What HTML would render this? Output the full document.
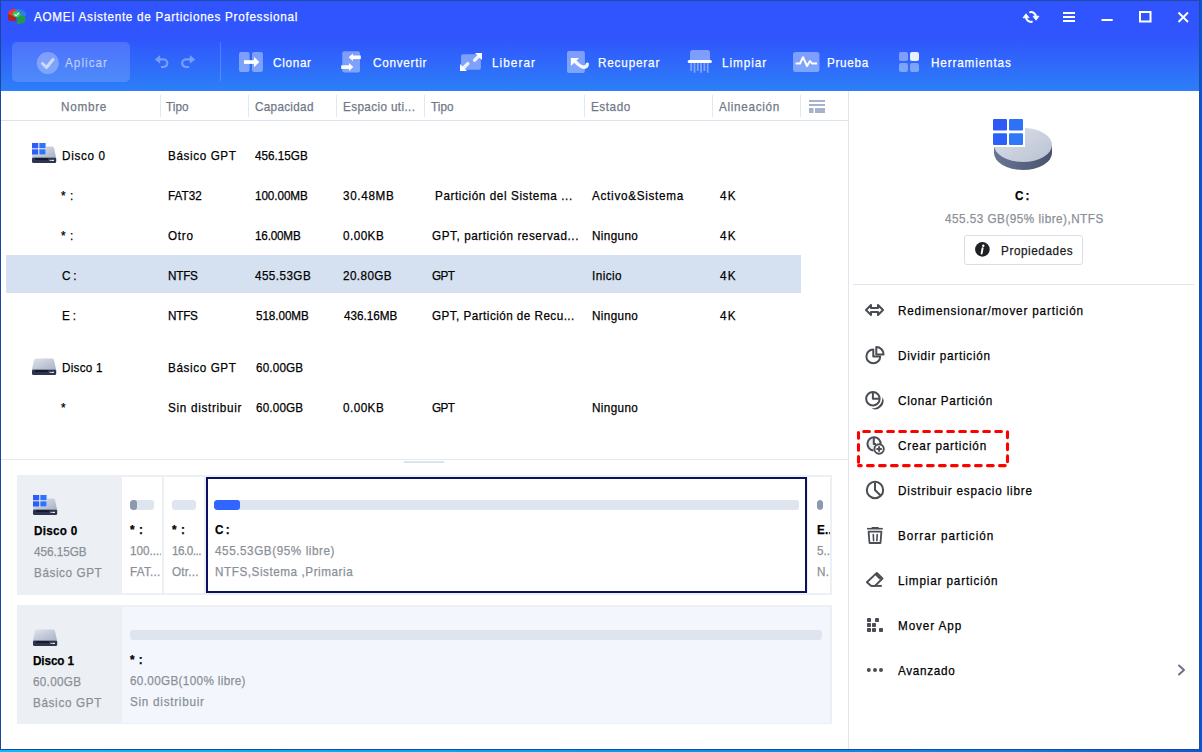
<!DOCTYPE html>
<html><head><meta charset="utf-8"><title>AOMEI</title>
<style>
html,body{margin:0;padding:0;}
body{width:1202px;height:752px;overflow:hidden;position:relative;background:#fff;font-family:"Liberation Sans",sans-serif;}
.abs{position:absolute;}
.t{position:absolute;white-space:nowrap;line-height:1;transform-origin:0 0;-webkit-text-stroke:0.25px currentColor;}
svg{display:block;}
</style></head><body>
<div class="abs" style="left:0;top:0;width:1202px;height:91px;background:linear-gradient(180deg,#3053ff 0px,#3055fd 38px,#2f66fb 60px,#2d7ff7 91px)"></div>
<svg class="abs" style="left:4px;top:5px" width="26" height="23" viewBox="4 5 26 23">
<path d="M16 9 C12 9 8.5 10.5 8 13 V19.5 C8.5 20.5 11 21 16 21 Z" fill="#b52222"/>
<path d="M16 9 C12 9 8.5 10.5 8 13 C8.5 15 12 16 16 16 Z" fill="#e53a3a"/>
<path d="M16 9 C21 9 25.5 10.5 26 13.5 V16 H16 Z" fill="#2d7fe0"/>
<path d="M17 16 H25.2 V21.5 C24.5 23 21 24 17 24 Z" fill="#239a45"/>
<ellipse cx="16.6" cy="14.3" rx="4" ry="3" fill="#35c85a"/>
<path d="M14.6 14.3 L16.2 15.8 L18.8 12.8" stroke="#fff" stroke-width="1.1" fill="none"/>
</svg>
<div class="t" style="left:33.70px;top:9.80px;font-size:13px;letter-spacing:0.789px;color:#ffffff;transform:scaleX(0.9);">AOMEI Asistente de Particiones Professional</div>
<svg class="abs" style="left:1018px;top:6px" width="180" height="22" viewBox="1018 6 180 22">
<g fill="none" stroke="#fff" stroke-width="2">
<path d="M1030.1 12.2 A5 5 0 0 1 1036 16.5" stroke-linecap="round"/>
<path d="M1031.9 21.8 A5 5 0 0 1 1026 17.5" stroke-linecap="round"/>
<line x1="1063" y1="13" x2="1075" y2="13"/><line x1="1063" y1="17" x2="1075" y2="17"/><line x1="1063" y1="21" x2="1075" y2="21"/>
<line x1="1101.5" y1="20" x2="1112.7" y2="20"/>
<rect x="1140" y="12" width="10.5" height="9.5"/>
<line x1="1178.5" y1="12.5" x2="1188" y2="22"/><line x1="1188" y1="12.5" x2="1178.5" y2="22"/>
</g>
<path d="M1023 17.8 L1029 17.8 L1026 13.8 Z" fill="#fff" stroke="#fff" stroke-width="0.8" stroke-linejoin="round"/>
<path d="M1033 16.2 L1039 16.2 L1036 20.2 Z" fill="#fff" stroke="#fff" stroke-width="0.8" stroke-linejoin="round"/>
</svg>
<div class="abs" style="left:12px;top:42px;width:118px;height:40px;border-radius:5px;background:rgba(255,255,255,0.15)"></div>
<svg class="abs" style="left:36px;top:52px" width="24" height="24" viewBox="0 0 24 24">
<circle cx="11.8" cy="11" r="11" fill="rgba(255,255,255,0.28)"/>
<path d="M6.5 11.5 L10.5 15.5 L17 7.5" stroke="rgba(255,255,255,0.6)" stroke-width="3" fill="none" stroke-linecap="round" stroke-linejoin="round"/>
</svg>
<div class="t" style="left:64.60px;top:56.00px;font-size:13px;letter-spacing:1.153px;color:rgba(255,255,255,0.55);transform:scaleX(0.9);">Aplicar</div>
<svg class="abs" style="left:150px;top:50px" width="50" height="22" viewBox="150 50 50 22">
<g fill="none" stroke="rgba(255,255,255,0.35)" stroke-width="2.2">
<path d="M160 59.4 H163.5 A3.8 3.8 0 0 1 163.5 67 H161"/>
<path d="M190.2 59.4 H186 A3.8 3.8 0 0 0 186 67 H189"/>
</g>
<path d="M154.7 59.4 L160.2 55 L160.2 63.8 Z" fill="rgba(255,255,255,0.35)"/>
<path d="M195.3 59.4 L189.8 55 L189.8 63.8 Z" fill="rgba(255,255,255,0.35)"/>
</svg>
<div class="abs" style="left:220px;top:42px;width:1px;height:39px;background:rgba(255,255,255,0.18)"></div>
<svg class="abs" style="left:230px;top:45px" width="700" height="32" viewBox="230 45 700 32">
<!-- clonar -->
<rect x="239" y="52" width="10.6" height="20" rx="2" fill="rgba(255,255,255,0.38)"/>
<rect x="252" y="52" width="10.9" height="20" rx="2" fill="rgba(255,255,255,0.38)"/>
<rect x="244" y="60.2" width="11" height="3.7" fill="#fff"/>
<path d="M254 56.8 L259.3 62 L254 67.2 Z" fill="#fff"/>
<!-- convertir -->
<rect x="342.3" y="51.2" width="17.7" height="21.3" rx="2" fill="rgba(255,255,255,0.38)"/>
<rect x="352.5" y="55.5" width="8.3" height="3.6" fill="#fff"/>
<path d="M353 53.4 L348.6 57.3 L353 61 Z" fill="#fff"/>
<rect x="341.2" y="65.3" width="8.5" height="3.6" fill="#fff"/>
<path d="M349 63 L353.3 67.1 L349 70.9 Z" fill="#fff"/>
<!-- liberar -->
<rect x="461" y="54.3" width="19.9" height="15.4" rx="2" fill="rgba(255,255,255,0.38)"/>
<path d="M474.6 60.3 L479 55.9" stroke="rgba(255,255,255,0.85)" stroke-width="3.4" stroke-linecap="round"/>
<path d="M467.8 63.6 L463.4 68" stroke="rgba(255,255,255,0.85)" stroke-width="3.4" stroke-linecap="round"/>
<path d="M482 52.9 L482 60 L475 53 Z" fill="#fff"/>
<path d="M460 70.9 L460 64 L467 70.9 Z" fill="#fff"/>
<!-- recuperar -->
<rect x="567" y="51" width="17.9" height="22" rx="2" fill="rgba(255,255,255,0.38)"/>
<path d="M575 61.3 C578 64.5 580.5 67.2 584 67.2 C586 67.2 587.2 66 587.3 64.2" stroke="rgba(255,255,255,0.92)" stroke-width="3.4" fill="none" stroke-linecap="round"/>
<path d="M570.9 58 L579 58 L570.9 66.1 Z" fill="#fff"/>
<!-- limpiar -->
<path d="M690 60.2 V52.5 A2.5 2.5 0 0 1 692.5 50 H707.5 A2.5 2.5 0 0 1 710 52.5 V60.2 Z" fill="rgba(255,255,255,0.38)"/>
<g fill="rgba(255,255,255,0.38)"><rect x="690.3" y="63" width="1.8" height="8"/><rect x="693.6" y="63" width="1.8" height="9.7"/><rect x="696.9" y="63" width="1.8" height="8"/><rect x="700.2" y="63" width="1.8" height="9.7"/><rect x="703.5" y="63" width="1.8" height="8"/><rect x="706.8" y="63" width="1.8" height="9.7"/></g>
<rect x="687.7" y="60" width="24.2" height="3" rx="1.5" fill="#fff"/>
<!-- prueba -->
<rect x="793" y="52" width="26.4" height="19.9" rx="2.5" fill="rgba(255,255,255,0.38)"/>
<path d="M795.6 63.5 H800 L803 57.2 L807 66 L810 61 L812 63.5 H817" stroke="#fff" stroke-width="2" fill="none" stroke-linejoin="round"/>
<!-- herramientas -->
<rect x="899" y="52" width="9" height="9" rx="2" fill="rgba(255,255,255,0.38)"/>
<rect x="910" y="52" width="9" height="9" rx="2" fill="rgba(255,255,255,0.9)"/>
<rect x="899" y="63" width="9" height="9" rx="2" fill="rgba(255,255,255,0.38)"/>
<rect x="910" y="63" width="9" height="9" rx="2" fill="rgba(255,255,255,0.38)"/>
</svg>
<div class="t" style="left:272.50px;top:56.00px;font-size:13px;letter-spacing:0.784px;color:#ffffff;transform:scaleX(0.9);">Clonar</div>
<div class="t" style="left:372.60px;top:56.00px;font-size:13px;letter-spacing:0.823px;color:#ffffff;transform:scaleX(0.9);">Convertir</div>
<div class="t" style="left:492.40px;top:56.00px;font-size:13px;letter-spacing:1.203px;color:#ffffff;transform:scaleX(0.9);">Liberar</div>
<div class="t" style="left:597.70px;top:56.00px;font-size:13px;letter-spacing:0.926px;color:#ffffff;transform:scaleX(0.9);">Recuperar</div>
<div class="t" style="left:721.50px;top:56.00px;font-size:13px;letter-spacing:1.067px;color:#ffffff;transform:scaleX(0.9);">Limpiar</div>
<div class="t" style="left:827.30px;top:56.00px;font-size:13px;letter-spacing:0.788px;color:#ffffff;transform:scaleX(0.9);">Prueba</div>
<div class="t" style="left:930.50px;top:56.00px;font-size:13px;letter-spacing:0.970px;color:#ffffff;transform:scaleX(0.9);">Herramientas</div>
<div class="abs" style="left:1px;top:120px;width:847px;height:1px;background:#dde3ee"></div>
<div class="abs" style="left:160px;top:95px;width:1px;height:22px;background:#e3e8f0"></div>
<div class="abs" style="left:248px;top:95px;width:1px;height:22px;background:#e3e8f0"></div>
<div class="abs" style="left:336px;top:95px;width:1px;height:22px;background:#e3e8f0"></div>
<div class="abs" style="left:424px;top:95px;width:1px;height:22px;background:#e3e8f0"></div>
<div class="abs" style="left:584px;top:95px;width:1px;height:22px;background:#e3e8f0"></div>
<div class="abs" style="left:712px;top:95px;width:1px;height:22px;background:#e3e8f0"></div>
<div class="abs" style="left:800px;top:95px;width:1px;height:22px;background:#e3e8f0"></div>
<div class="t" style="left:60.70px;top:100.00px;font-size:13px;letter-spacing:0.817px;color:#6f7787;transform:scaleX(0.9);">Nombre</div>
<div class="t" style="left:166.20px;top:100.00px;font-size:13px;letter-spacing:0.067px;color:#6f7787;transform:scaleX(0.9);">Tipo</div>
<div class="t" style="left:254.60px;top:100.00px;font-size:13px;letter-spacing:0.342px;color:#6f7787;transform:scaleX(0.9);">Capacidad</div>
<div class="t" style="left:342.70px;top:100.00px;font-size:13px;letter-spacing:0.427px;color:#6f7787;transform:scaleX(0.9);">Espacio uti...</div>
<div class="t" style="left:430.50px;top:100.00px;font-size:13px;letter-spacing:0.067px;color:#6f7787;transform:scaleX(0.9);">Tipo</div>
<div class="t" style="left:590.50px;top:100.00px;font-size:13px;letter-spacing:0.621px;color:#6f7787;transform:scaleX(0.9);">Estado</div>
<div class="t" style="left:718.70px;top:100.00px;font-size:13px;letter-spacing:0.778px;color:#6f7787;transform:scaleX(0.9);">Alineación</div>
<svg class="abs" style="left:809px;top:100px" width="16" height="13" viewBox="0 0 16 13" fill="#a5b2ca">
<rect x="0" y="0" width="16" height="2"/><rect x="0" y="4" width="16" height="2"/><rect x="0" y="8" width="4.5" height="5"/><rect x="6" y="8" width="10" height="5"/></svg>
<div class="abs" style="left:6px;top:255px;width:795px;height:38px;background:#d5e0f0"></div>
<svg class="abs" style="left:32px;top:143px" width="26" height="22" viewBox="0 0 26 22"><defs><linearGradient id="dg32143" x1="0" y1="0" x2="1" y2="1"><stop offset="0" stop-color="#dfe3ec"/><stop offset="1" stop-color="#aab3c6"/></linearGradient></defs><path d="M4 3.5 H20.5 Q21.5 3.5 22 5 L24 14 H0 L2 5 Q2.5 3.5 4 3.5Z" fill="url(#dg32143)"/><rect x="0" y="14" width="24.2" height="6" rx="1.5" fill="#2c3450"/><rect x="0.5" y="14" width="23.2" height="0.8" fill="#e6e9f0" opacity="0.6"/><rect x="3" y="15.2" width="13" height="1.5" rx="0.5" fill="#0e1220"/><rect x="17.6" y="16.8" width="1.1" height="1.2" fill="#fff"/><rect x="19.4" y="16.8" width="2.4" height="1.2" fill="#fff"/><rect x="0" y="0" width="14" height="12" fill="#fff" opacity="0.8"/><rect x="0" y="0" width="6.3" height="5.3" fill="#2d5cf6"/><rect x="7.3" y="0" width="6.3" height="5.3" fill="#2f74f8"/><rect x="0" y="6.3" width="6.3" height="5.3" fill="#2d5cf6"/><rect x="7.3" y="6.3" width="6.3" height="5.3" fill="#2f74f8"/></svg>
<svg class="abs" style="left:32px;top:355px" width="26" height="22" viewBox="0 0 26 22"><defs><linearGradient id="dg32355" x1="0" y1="0" x2="1" y2="1"><stop offset="0" stop-color="#dfe3ec"/><stop offset="1" stop-color="#aab3c6"/></linearGradient></defs><path d="M4 3.5 H20.5 Q21.5 3.5 22 5 L24 14 H0 L2 5 Q2.5 3.5 4 3.5Z" fill="url(#dg32355)"/><rect x="0" y="14" width="24.2" height="6" rx="1.5" fill="#2c3450"/><rect x="0.5" y="14" width="23.2" height="0.8" fill="#e6e9f0" opacity="0.6"/><rect x="3" y="15.2" width="13" height="1.5" rx="0.5" fill="#0e1220"/><rect x="17.6" y="16.8" width="1.1" height="1.2" fill="#fff"/><rect x="19.4" y="16.8" width="2.4" height="1.2" fill="#fff"/></svg>
<div class="t" style="left:61.50px;top:149.00px;font-size:13px;letter-spacing:0.756px;color:#000;transform:scaleX(0.9);">Disco 0</div>
<div class="t" style="left:167.50px;top:149.00px;font-size:13px;letter-spacing:0.677px;color:#000;transform:scaleX(0.9);">Básico GPT</div>
<div class="t" style="left:255.30px;top:149.00px;font-size:13px;letter-spacing:0.001px;color:#000;transform:scaleX(0.9);">456.15GB</div>
<div class="t" style="left:61.20px;top:189.00px;font-size:13px;letter-spacing:0.683px;color:#000;transform:scaleX(0.9);">* :</div>
<div class="t" style="left:167.50px;top:189.00px;font-size:13px;letter-spacing:0.024px;color:#000;transform:scaleX(0.9);">FAT32</div>
<div class="t" style="left:255.20px;top:189.00px;font-size:13px;letter-spacing:-0.083px;color:#000;transform:scaleX(0.9);">100.00MB</div>
<div class="t" style="left:343.00px;top:189.00px;font-size:13px;letter-spacing:0.732px;color:#000;transform:scaleX(0.9);">30.48MB</div>
<div class="t" style="left:435.40px;top:189.00px;font-size:13px;letter-spacing:0.662px;color:#000;transform:scaleX(0.9);">Partición del Sistema ...</div>
<div class="t" style="left:591.70px;top:189.00px;font-size:13px;letter-spacing:0.800px;color:#000;transform:scaleX(0.9);">Activo&Sistema</div>
<div class="t" style="left:720.00px;top:189.00px;font-size:13px;letter-spacing:1.322px;color:#000;transform:scaleX(0.9);">4K</div>
<div class="t" style="left:61.20px;top:229.00px;font-size:13px;letter-spacing:0.683px;color:#000;transform:scaleX(0.9);">* :</div>
<div class="t" style="left:167.50px;top:229.00px;font-size:13px;letter-spacing:0.789px;color:#000;transform:scaleX(0.9);">Otro</div>
<div class="t" style="left:255.30px;top:229.00px;font-size:13px;letter-spacing:-0.212px;color:#000;transform:scaleX(0.9);">16.00MB</div>
<div class="t" style="left:343.40px;top:229.00px;font-size:13px;letter-spacing:0.514px;color:#000;transform:scaleX(0.9);">0.00KB</div>
<div class="t" style="left:432.00px;top:229.00px;font-size:13px;letter-spacing:0.641px;color:#000;transform:scaleX(0.9);">GPT, partición reservad...</div>
<div class="t" style="left:591.70px;top:229.00px;font-size:13px;letter-spacing:0.406px;color:#000;transform:scaleX(0.9);">Ninguno</div>
<div class="t" style="left:720.00px;top:229.00px;font-size:13px;letter-spacing:1.322px;color:#000;transform:scaleX(0.9);">4K</div>
<div class="t" style="left:61.60px;top:269.00px;font-size:13px;letter-spacing:-0.189px;color:#000;transform:scaleX(0.9);">C :</div>
<div class="t" style="left:167.60px;top:269.00px;font-size:13px;letter-spacing:-0.243px;color:#000;transform:scaleX(0.9);">NTFS</div>
<div class="t" style="left:255.30px;top:269.00px;font-size:13px;letter-spacing:0.477px;color:#000;transform:scaleX(0.9);">455.53GB</div>
<div class="t" style="left:343.40px;top:269.00px;font-size:13px;letter-spacing:0.450px;color:#000;transform:scaleX(0.9);">20.80GB</div>
<div class="t" style="left:431.50px;top:269.00px;font-size:13px;letter-spacing:-0.572px;color:#000;transform:scaleX(0.9);">GPT</div>
<div class="t" style="left:591.70px;top:269.00px;font-size:13px;letter-spacing:0.486px;color:#000;transform:scaleX(0.9);">Inicio</div>
<div class="t" style="left:720.00px;top:269.00px;font-size:13px;letter-spacing:1.322px;color:#000;transform:scaleX(0.9);">4K</div>
<div class="t" style="left:61.60px;top:309.00px;font-size:13px;letter-spacing:-0.228px;color:#000;transform:scaleX(0.9);">E :</div>
<div class="t" style="left:167.60px;top:309.00px;font-size:13px;letter-spacing:-0.243px;color:#000;transform:scaleX(0.9);">NTFS</div>
<div class="t" style="left:255.60px;top:309.00px;font-size:13px;letter-spacing:-0.083px;color:#000;transform:scaleX(0.9);">518.00MB</div>
<div class="t" style="left:343.60px;top:309.00px;font-size:13px;letter-spacing:0.012px;color:#000;transform:scaleX(0.9);">436.16MB</div>
<div class="t" style="left:431.50px;top:309.00px;font-size:13px;letter-spacing:0.507px;color:#000;transform:scaleX(0.9);">GPT, Partición de Recu...</div>
<div class="t" style="left:591.70px;top:309.00px;font-size:13px;letter-spacing:0.406px;color:#000;transform:scaleX(0.9);">Ninguno</div>
<div class="t" style="left:720.00px;top:309.00px;font-size:13px;letter-spacing:1.322px;color:#000;transform:scaleX(0.9);">4K</div>
<div class="t" style="left:61.50px;top:361.00px;font-size:13px;letter-spacing:0.294px;color:#000;transform:scaleX(0.9);">Disco 1</div>
<div class="t" style="left:167.50px;top:361.00px;font-size:13px;letter-spacing:0.677px;color:#000;transform:scaleX(0.9);">Básico GPT</div>
<div class="t" style="left:255.60px;top:361.00px;font-size:13px;letter-spacing:0.172px;color:#000;transform:scaleX(0.9);">60.00GB</div>
<div class="t" style="left:61.20px;top:401.00px;font-size:13px;letter-spacing:0.000px;color:#000;transform:scaleX(0.9);">*</div>
<div class="t" style="left:167.60px;top:401.00px;font-size:13px;letter-spacing:0.774px;color:#000;transform:scaleX(0.9);">Sin distribuir</div>
<div class="t" style="left:255.60px;top:401.00px;font-size:13px;letter-spacing:0.172px;color:#000;transform:scaleX(0.9);">60.00GB</div>
<div class="t" style="left:343.40px;top:401.00px;font-size:13px;letter-spacing:0.514px;color:#000;transform:scaleX(0.9);">0.00KB</div>
<div class="t" style="left:431.50px;top:401.00px;font-size:13px;letter-spacing:-0.572px;color:#000;transform:scaleX(0.9);">GPT</div>
<div class="t" style="left:591.70px;top:401.00px;font-size:13px;letter-spacing:0.406px;color:#000;transform:scaleX(0.9);">Ninguno</div>
<div class="abs" style="left:1px;top:459px;width:847px;height:1px;background:#e2e7f0"></div>
<div class="abs" style="left:404px;top:461px;width:40px;height:2px;background:#dce3ef"></div>
<div class="abs" style="left:17px;top:475px;width:815px;height:120px;background:#eceff4"></div>
<svg class="abs" style="left:33px;top:495px" width="26" height="22" viewBox="0 0 26 22"><defs><linearGradient id="dg33495" x1="0" y1="0" x2="1" y2="1"><stop offset="0" stop-color="#dfe3ec"/><stop offset="1" stop-color="#aab3c6"/></linearGradient></defs><path d="M4 3.5 H20.5 Q21.5 3.5 22 5 L24 14 H0 L2 5 Q2.5 3.5 4 3.5Z" fill="url(#dg33495)"/><rect x="0" y="14" width="24.2" height="6" rx="1.5" fill="#2c3450"/><rect x="0.5" y="14" width="23.2" height="0.8" fill="#e6e9f0" opacity="0.6"/><rect x="3" y="15.2" width="13" height="1.5" rx="0.5" fill="#0e1220"/><rect x="17.6" y="16.8" width="1.1" height="1.2" fill="#fff"/><rect x="19.4" y="16.8" width="2.4" height="1.2" fill="#fff"/><rect x="0" y="0" width="14" height="12" fill="#fff" opacity="0.8"/><rect x="0" y="0" width="6.3" height="5.3" fill="#2d5cf6"/><rect x="7.3" y="0" width="6.3" height="5.3" fill="#2f74f8"/><rect x="0" y="6.3" width="6.3" height="5.3" fill="#2d5cf6"/><rect x="7.3" y="6.3" width="6.3" height="5.3" fill="#2f74f8"/></svg>
<div class="t" style="left:33.50px;top:523.80px;font-size:13px;letter-spacing:0.310px;color:#000;transform:scaleX(0.9);font-weight:bold;">Disco 0</div>
<div class="t" style="left:33.50px;top:545.00px;font-size:13px;letter-spacing:-0.015px;color:#8b8f97;transform:scaleX(0.9);">456.15GB</div>
<div class="t" style="left:33.50px;top:565.50px;font-size:13px;letter-spacing:0.652px;color:#8b8f97;transform:scaleX(0.9);">Básico GPT</div>
<div class="abs" style="left:122px;top:477px;width:40px;height:116px;background:#fff"></div>
<div class="abs" style="left:164px;top:477px;width:40px;height:116px;background:#fff"></div>
<div class="abs" style="left:206px;top:477px;width:597px;height:112px;background:#fff;border:2px solid #0b1160"></div>
<div class="abs" style="left:808px;top:477px;width:22px;height:116px;background:#fff"></div>
<div class="abs" style="left:130px;top:500px;width:24px;height:10px;border-radius:3px;background:#dfe5ef;overflow:hidden"><div style="width:7px;height:10px;border-radius:3px;background:#8c9ab0"></div></div>
<div class="abs" style="left:172px;top:500px;width:24px;height:10px;border-radius:3px;background:#dfe5ef;overflow:hidden"></div>
<div class="abs" style="left:214px;top:500px;width:585px;height:10px;border-radius:3px;background:#dfe5ef;overflow:hidden"><div style="width:26px;height:10px;border-radius:3px;background:#3066ff"></div></div>
<div class="abs" style="left:817px;top:500px;width:6px;height:10px;border-radius:3px;background:#dfe5ef;overflow:hidden"><div style="width:6px;height:10px;border-radius:3px;background:#8c9ab0"></div></div>
<div class="abs" style="left:122px;top:480px;width:39px;height:110px;overflow:hidden"><div class="t" style="left:8.00px;top:43.00px;font-size:13px;letter-spacing:0.611px;color:#000;transform:scaleX(0.9);font-weight:bold;">* :</div><div class="t" style="left:8.00px;top:64.00px;font-size:13px;letter-spacing:0.000px;color:#8b8f97;transform:scaleX(0.9);">100.......</div><div class="t" style="left:8.00px;top:85.00px;font-size:13px;letter-spacing:0.281px;color:#8b8f97;transform:scaleX(0.9);">FAT.....</div></div>
<div class="abs" style="left:164px;top:480px;width:39px;height:110px;overflow:hidden"><div class="t" style="left:8.00px;top:43.00px;font-size:13px;letter-spacing:0.611px;color:#000;transform:scaleX(0.9);font-weight:bold;">* :</div><div class="t" style="left:8.00px;top:64.00px;font-size:13px;letter-spacing:-0.544px;color:#8b8f97;transform:scaleX(0.9);">16.0...</div><div class="t" style="left:8.00px;top:85.00px;font-size:13px;letter-spacing:0.281px;color:#8b8f97;transform:scaleX(0.9);">Otr...</div></div>
<div class="abs" style="left:208px;top:480px;width:595px;height:110px;overflow:hidden"><div class="t" style="left:6.50px;top:43.00px;font-size:13px;letter-spacing:-0.508px;color:#000;transform:scaleX(0.9);font-weight:bold;">C :</div><div class="t" style="left:6.50px;top:64.00px;font-size:13px;letter-spacing:0.632px;color:#8b8f97;transform:scaleX(0.9);">455.53GB(95% libre)</div><div class="t" style="left:6.50px;top:85.00px;font-size:13px;letter-spacing:0.612px;color:#8b8f97;transform:scaleX(0.9);">NTFS,Sistema ,Primaria</div></div>
<div class="abs" style="left:808px;top:480px;width:22px;height:110px;overflow:hidden"><div class="t" style="left:9.00px;top:43.00px;font-size:13px;letter-spacing:0.200px;color:#000;transform:scaleX(0.9);font-weight:bold;">E..</div><div class="t" style="left:9.00px;top:64.00px;font-size:13px;letter-spacing:0.000px;color:#8b8f97;transform:scaleX(0.9);">5..</div><div class="t" style="left:9.00px;top:85.00px;font-size:13px;letter-spacing:0.250px;color:#8b8f97;transform:scaleX(0.9);">N..</div></div>
<div class="abs" style="left:17px;top:605px;width:815px;height:119px;background:#eceff4"></div>
<div class="abs" style="left:122px;top:607px;width:708px;height:116px;background:#f3f7fd"></div>
<svg class="abs" style="left:33px;top:626px" width="26" height="22" viewBox="0 0 26 22"><defs><linearGradient id="dg33626" x1="0" y1="0" x2="1" y2="1"><stop offset="0" stop-color="#dfe3ec"/><stop offset="1" stop-color="#aab3c6"/></linearGradient></defs><path d="M4 3.5 H20.5 Q21.5 3.5 22 5 L24 14 H0 L2 5 Q2.5 3.5 4 3.5Z" fill="url(#dg33626)"/><rect x="0" y="14" width="24.2" height="6" rx="1.5" fill="#2c3450"/><rect x="0.5" y="14" width="23.2" height="0.8" fill="#e6e9f0" opacity="0.6"/><rect x="3" y="15.2" width="13" height="1.5" rx="0.5" fill="#0e1220"/><rect x="17.6" y="16.8" width="1.1" height="1.2" fill="#fff"/><rect x="19.4" y="16.8" width="2.4" height="1.2" fill="#fff"/></svg>
<div class="t" style="left:33.30px;top:653.70px;font-size:13px;letter-spacing:-0.116px;color:#000;transform:scaleX(0.9);font-weight:bold;">Disco 1</div>
<div class="t" style="left:33.30px;top:674.70px;font-size:13px;letter-spacing:0.339px;color:#8b8f97;transform:scaleX(0.9);">60.00GB</div>
<div class="t" style="left:33.30px;top:695.70px;font-size:13px;letter-spacing:0.727px;color:#8b8f97;transform:scaleX(0.9);">Básico GPT</div>
<div class="abs" style="left:130px;top:630px;width:692px;height:10px;border-radius:3px;background:#dfe5ef;overflow:hidden"></div>
<div class="t" style="left:130.30px;top:653.00px;font-size:13px;letter-spacing:0.556px;color:#000;transform:scaleX(0.9);font-weight:bold;">* :</div>
<div class="t" style="left:130.30px;top:674.00px;font-size:13px;letter-spacing:0.385px;color:#8b8f97;transform:scaleX(0.9);">60.00GB(100% libre)</div>
<div class="t" style="left:130.30px;top:695.00px;font-size:13px;letter-spacing:0.816px;color:#8b8f97;transform:scaleX(0.9);">Sin distribuir</div>
<div class="abs" style="left:848px;top:91px;width:1px;height:658px;background:#dfe5f0"></div>
<svg class="abs" style="left:990px;top:116px" width="66" height="58" viewBox="990 116 66 58">
<defs><linearGradient id="rtop" x1="0" y1="0" x2="1" y2="1"><stop offset="0" stop-color="#dde1ea"/><stop offset="1" stop-color="#b9c1d2"/></linearGradient>
<linearGradient id="rside" x1="0" y1="0" x2="1" y2="0"><stop offset="0" stop-color="#6a7594"/><stop offset="1" stop-color="#48536f"/></linearGradient></defs>
<path d="M994 145 V153 A29 17 0 0 0 1052 153 V145 Z" fill="url(#rside)"/>
<ellipse cx="1023" cy="145" rx="29" ry="17" fill="url(#rtop)"/>
<rect x="991" y="117" width="34" height="30" fill="#fff"/>
<rect x="993" y="119" width="14" height="11.5" rx="1" fill="#2d5af7"/>
<rect x="1009" y="119" width="14" height="11.5" rx="1" fill="#2f72f8"/>
<rect x="993" y="133.2" width="14" height="11.8" rx="1" fill="#2d60f7"/>
<rect x="1009" y="133.2" width="14" height="11.8" rx="1" fill="#2f78f8"/>
</svg>
<div class="t" style="left:1014.60px;top:188.70px;font-size:13px;letter-spacing:-0.731px;color:#000;transform:scaleX(0.9);font-weight:bold;">C :</div>
<div class="t" style="left:944.80px;top:211.70px;font-size:13px;letter-spacing:0.551px;color:#8b8f97;transform:scaleX(0.9);">455.53 GB(95% libre),NTFS</div>
<div class="abs" style="left:964px;top:235px;width:117px;height:28px;border:1px solid #d8dee9;border-radius:3px;background:#fff"></div>
<svg class="abs" style="left:975px;top:242px" width="15" height="15" viewBox="0 0 15 15"><circle cx="7.4" cy="7.4" r="7.3" fill="#1f2125"/>
<circle cx="8.3" cy="3.8" r="1.2" fill="#fff"/><path d="M7.6 6.2 L6.6 11.5" stroke="#fff" stroke-width="1.9" stroke-linecap="round"/></svg>
<div class="t" style="left:1000.70px;top:243.90px;font-size:13px;letter-spacing:0.656px;color:#18191c;transform:scaleX(0.9);">Propiedades</div>
<div class="abs" style="left:853px;top:284px;width:341px;height:1px;background:#e0e6f0"></div>
<div class="t" style="left:897.50px;top:304.00px;font-size:13px;letter-spacing:0.920px;color:#000;transform:scaleX(0.9);">Redimensionar/mover partición</div>
<div class="t" style="left:897.50px;top:349.00px;font-size:13px;letter-spacing:0.843px;color:#000;transform:scaleX(0.9);">Dividir partición</div>
<div class="t" style="left:897.50px;top:394.00px;font-size:13px;letter-spacing:0.811px;color:#000;transform:scaleX(0.9);">Clonar Partición</div>
<div class="t" style="left:897.50px;top:439.00px;font-size:13px;letter-spacing:0.911px;color:#000;transform:scaleX(0.9);">Crear partición</div>
<div class="t" style="left:897.50px;top:484.00px;font-size:13px;letter-spacing:0.917px;color:#000;transform:scaleX(0.9);">Distribuir espacio libre</div>
<div class="t" style="left:897.50px;top:529.00px;font-size:13px;letter-spacing:1.136px;color:#000;transform:scaleX(0.9);">Borrar partición</div>
<div class="t" style="left:897.50px;top:574.00px;font-size:13px;letter-spacing:0.950px;color:#000;transform:scaleX(0.9);">Limpiar partición</div>
<div class="t" style="left:897.50px;top:619.00px;font-size:13px;letter-spacing:1.009px;color:#000;transform:scaleX(0.9);">Mover App</div>
<div class="t" style="left:897.50px;top:664.00px;font-size:13px;letter-spacing:0.771px;color:#000;transform:scaleX(0.9);">Avanzado</div>
<svg class="abs" style="left:855px;top:295px" width="40" height="400" viewBox="855 295 40 400">
<g fill="none" stroke="#4a4d53" stroke-width="2" stroke-linejoin="round">
<path d="M866 310 L871 305 V308 H878 V305 L883 310 L878 315 V312 H871 V315 Z"/>
<path d="M873.3 349.5 A6.9 6.9 0 1 0 880.2 356.4 H873.3 Z"/>
<path d="M876.3 347 V354.4 H883.6 A7.3 7.3 0 0 0 876.3 347 Z"/>
<circle cx="872.9" cy="398.7" r="6.75"/>
<path d="M872.9 392 V398.7 H879.6"/>
<path d="M882.4 397 A8.3 8.3 0 0 1 871.3 408.4 A10.6 10.6 0 0 0 882.4 397 Z" fill="#4a4d53" stroke="none"/>
<path d="M873.8 443.8 V437.2 A6.6 6.6 0 1 0 880.4 443.8 Z" fill="#eceef3" stroke="none"/>
<path d="M880.6 444.5 A6.6 6.6 0 1 0 873.5 450.4"/>
<path d="M873.8 437 V444 H876"/>
<circle cx="879.1" cy="449" r="4.7" fill="#fff" stroke-width="1.9"/>
<path d="M876.4 449 H881.8 M879.1 446.3 V451.7" stroke-width="1.9"/>
<circle cx="875" cy="490" r="8.2"/>
<path d="M875 483 V490 L880.5 495.5"/>
<path d="M868.6 531.6 H881.4 L880.5 543 H869.5 Z" stroke-width="1.8"/>
<path d="M867 528.7 H882.8" stroke-width="1.6"/><path d="M872.2 527.7 H878.2" stroke-width="1.3" stroke-linecap="round"/>
<path d="M873.3 534.6 L873.6 540.6 M877.2 534.6 L876.9 540.6" stroke-width="1.6" stroke-linecap="round"/>
<path d="M866.9 582.2 L876.8 572.9 L882.5 578.5 L875 585.9 H871.3 Z" stroke-width="1.9"/>
<path d="M871.3 585.9 H881.8" stroke-width="1.9"/>
<path d="M876.2 574.6 L880.6 579" stroke-width="2.2"/>
</g>
<g fill="#4a4d53">

<rect x="867" y="618" width="4" height="4" rx="0.8"/><rect x="875" y="618" width="4" height="4" rx="0.8"/>
<rect x="867" y="623" width="4" height="4" rx="0.8"/><rect x="872" y="623" width="4" height="4" rx="0.8"/>
<rect x="867" y="628" width="4" height="4" rx="0.8"/><rect x="872" y="628" width="4" height="4" rx="0.8"/><rect x="879" y="628" width="4" height="4" rx="0.8"/>
<circle cx="868.8" cy="670" r="2"/><circle cx="875" cy="670" r="2"/><circle cx="881" cy="670" r="2"/>
</g>
<path d="M0 0" />
</svg>
<svg class="abs" style="left:1174px;top:660px" width="16" height="20" viewBox="1174 660 16 20"><path d="M1179 665.5 L1184 670 L1179 674.5" fill="none" stroke="#6b7280" stroke-width="2" stroke-linecap="round" stroke-linejoin="round"/></svg>
<svg class="abs" style="left:850px;top:420px" width="170" height="55" viewBox="850 420 170 55"><g stroke="#ff0000" stroke-width="3.1" stroke-linecap="round" stroke-dasharray="5.7 6.3" fill="none">
<line x1="863.7" y1="431.5" x2="1007.5" y2="431.5"/>
<line x1="858.6" y1="465.6" x2="1007.5" y2="465.6" stroke-dashoffset="3.1"/>
<line x1="858.5" y1="432.5" x2="858.5" y2="466"/>
<line x1="1007.5" y1="431.9" x2="1007.5" y2="466"/>
</g></svg>
<div class="abs" style="left:0;top:750px;width:1202px;height:2px;background:linear-gradient(90deg,#00c0ff,#00a4f2 45%,#0a80e2 85%,#0a5ad2)"></div>
<div class="abs" style="left:1200px;top:0;width:2px;height:752px;background:#0357dc"></div>
<div class="abs" style="left:0;top:0;width:1200px;height:1px;background:#1a4fa0"></div>
<div class="abs" style="left:0;top:0;width:1px;height:750px;background:#1a47a0"></div>
<div class="abs" style="left:0;top:749px;width:1200px;height:1px;background:#1a47a0"></div>
<div class="abs" style="left:1199px;top:0;width:1px;height:750px;background:#1a4fa0"></div>
</body></html>
